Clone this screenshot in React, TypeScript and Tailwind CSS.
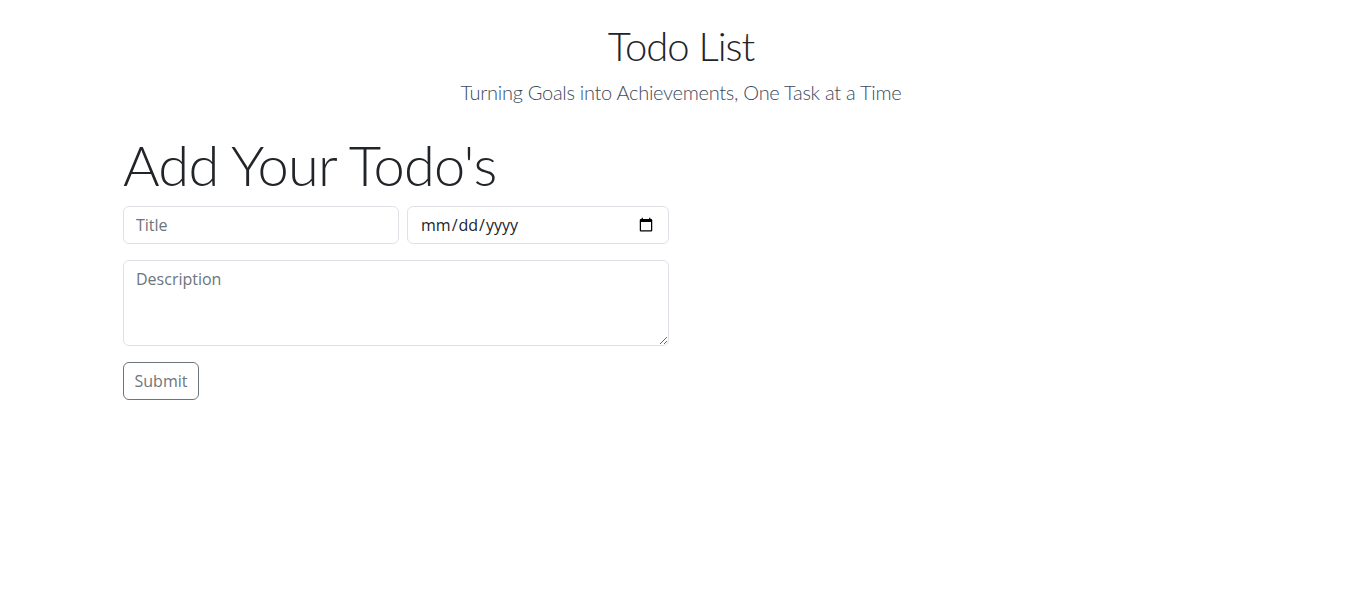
import React from "react";

export default function App() {
  return (
    <div className="min-h-[615px] bg-white text-[#212529]" style={{ fontFamily: "Lato, 'Open Sans', sans-serif" }}>
      <div className="pl-[7px] pt-[22px] text-center">
        <h1 className="text-[40px] font-light leading-[1.2] tracking-[-1px] text-[#212529]">Todo List</h1>
        <p className="mt-[7px] text-[20px] font-light leading-[1.5] tracking-[-0.28px] text-[#3d4a5c]">
          Turning Goals into Achievements, One Task at a Time
        </p>
      </div>
      <div className="pl-[123px] pt-[24px]">
        <h2 className="text-[56px] font-light leading-[1.2] tracking-[-0.75px] text-[#212529]">Add Your Todo's</h2>
        <form className="mt-[8px] w-[546px]" onSubmit={(e) => e.preventDefault()}>
          <div className="flex gap-[8px]">
            <input
              type="text"
              placeholder="Title"
              className="h-[38px] w-[276px] rounded-[6px] border border-[#dee2e6] px-[12px] text-[16px] text-[#212529] placeholder:text-[#6c757d] outline-none"
              style={{ fontFamily: "'Open Sans', sans-serif" }}
            />
            <input
              type="date"
              className="h-[38px] flex-1 rounded-[6px] border border-[#dee2e6] px-[12px] text-[16px] text-[#212529] outline-none"
              style={{ fontFamily: "'Open Sans', sans-serif" }}
            />
          </div>
          <textarea
            placeholder="Description"
            className="mt-[16px] block h-[86px] w-[546px] rounded-[6px] border border-[#dee2e6] px-[12px] py-[6px] text-[16px] text-[#212529] placeholder:text-[#6c757d] outline-none"
            style={{ fontFamily: "'Open Sans', sans-serif" }}
          />
          <button
            type="submit"
            className="mt-[16px] h-[38px] w-[76px] rounded-[6px] border border-[#6c757d] text-[16px] text-[#6c757d]"
            style={{ fontFamily: "'Open Sans', sans-serif" }}
          >
            Submit
          </button>
        </form>
      </div>
    </div>
  );
}
